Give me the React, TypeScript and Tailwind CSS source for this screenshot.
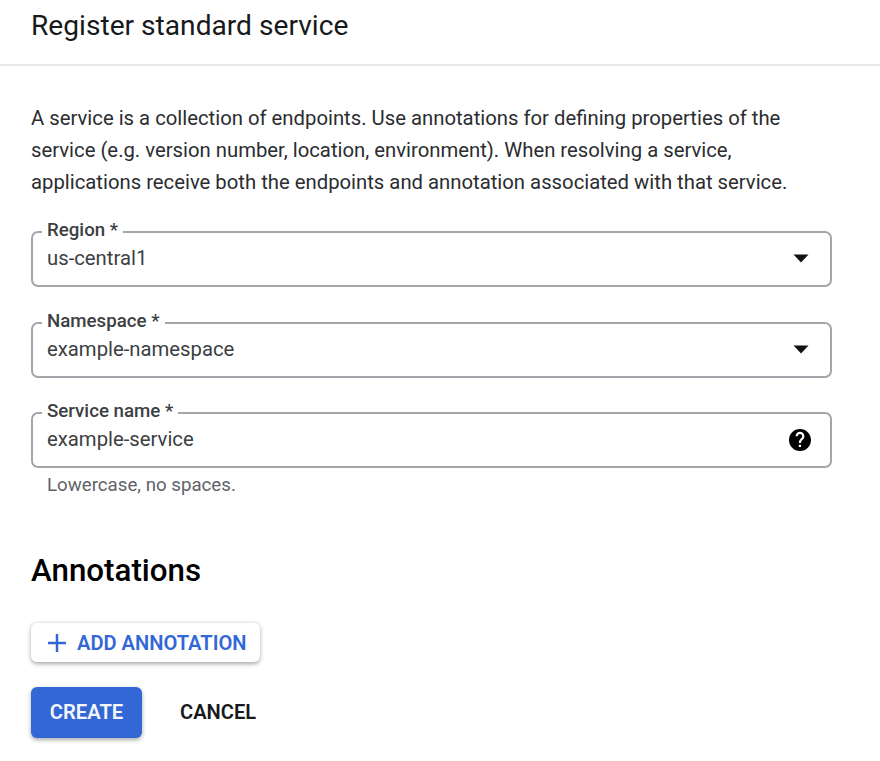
function Field({ label, value, gapClass, icon }: { label: string; value: string; gapClass?: string; icon: "drop" | "help" }) {
  return (
    <div className={`relative h-[56px] w-[801px] rounded-[7px] border-2 border-[#a3a7ab] flex items-center justify-between pl-[14px] pr-[21px] ${gapClass ?? ""}`}>
      <span className="absolute left-[9px] -top-[13px] bg-white px-[5px] text-[18.700px] leading-[20px] font-medium text-[#3c4043]">{label}</span>
      <span className="text-[20.300px] leading-[24px] mt-[-2px] text-[#3c4043]">{value}</span>
      {icon === "drop" ? (
        <svg width="16" height="9" viewBox="0 0 16 9" className="mt-[-1px]"><path d="M0.5 0.5H15.5L8 8.5Z" fill="#111" /></svg>
      ) : (
        <svg width="24" height="24" viewBox="0 0 24 24" className="-mr-[3px] -mt-[1px]"><path fill="#000" d="M12 1C5.9 1 1 5.9 1 12s4.9 11 11 11 11-4.9 11-11S18.100 1 12 1zm1.100 18h-2.300v-2.300h2.300V19zm2.300-8.100-1 1c-.8.8-1.300 1.500-1.300 3h-2.200v-.6c0-1.200.5-2.300 1.300-3.100l1.400-1.400c.4-.4.600-.9.600-1.600 0-1.200-1-2.200-2.200-2.200S9.800 7 9.800 8.200H7.600C7.600 5.800 9.600 3.800 12 3.800s4.400 2 4.400 4.400c0 1.100-.4 2-1 2.700z" /></svg>
      )}
    </div>
  );
}

export default function App() {
  return (
    <div className="w-[880px] h-[761px] overflow-hidden bg-white font-['Roboto',sans-serif] text-[#202124]">
      <div className="h-[66px] border-b-2 border-[#e8e9ea] pl-[31px] pt-[9px]">
        <h1 className="text-[28.150px] leading-[34px] font-normal text-[#17191c]">Register standard service</h1>
      </div>
      <div className="pl-[31px]">
        <p className="mt-[36px] w-[810px] text-[20.300px] leading-[32px] text-[#2b2d30]">
          A service is a collection of endpoints. Use annotations for defining properties of the<br />
          service (e.g. version number, location, environment). When resolving a service,<br />
          applications receive both the endpoints and annotation associated with that service.
        </p>
        <div className="mt-[33px] flex flex-col">
          <Field label="Region *" value="us-central1" icon="drop" />
          <Field label="Namespace *" value="example-namespace" icon="drop" gapClass="mt-[35px]" />
          <Field label="Service name *" value="example-service" icon="help" gapClass="mt-[34px]" />
        </div>
        <div className="mt-[6px] pl-[16px] text-[18.700px] leading-[22px] text-[#5f6368]">Lowercase, no spaces.</div>
        <h2 className="mt-[55px] text-[31.300px] leading-[40px] font-medium text-black">Annotations</h2>
        <button className="mt-[32px] flex h-[39px] w-[229px] items-center rounded-[6px] bg-white pl-[16px] pt-[1px] text-[20.100px] font-semibold text-[#3367d6] shadow-[0_1.500px_4px_rgba(60,64,67,0.45)]">
          <svg width="20" height="20" viewBox="0 0 20 20" className="mr-[10px]"><path d="M10 1v18M1 10h18" stroke="#3367d6" strokeWidth="2.500" /></svg>
          ADD ANNOTATION
        </button>
        <div className="mt-[25px] flex items-start">
          <button className="h-[51px] w-[111px] rounded-[6px] bg-[#3367d6] text-[20.200px] font-semibold text-[#f4f6fc] shadow-[0_2px_4px_rgba(60,64,67,0.45)]">CREATE</button>
          <button className="ml-[38px] h-[50px] text-[20.100px] font-semibold text-[#17191c]">CANCEL</button>
        </div>
      </div>
    </div>
  );
}
